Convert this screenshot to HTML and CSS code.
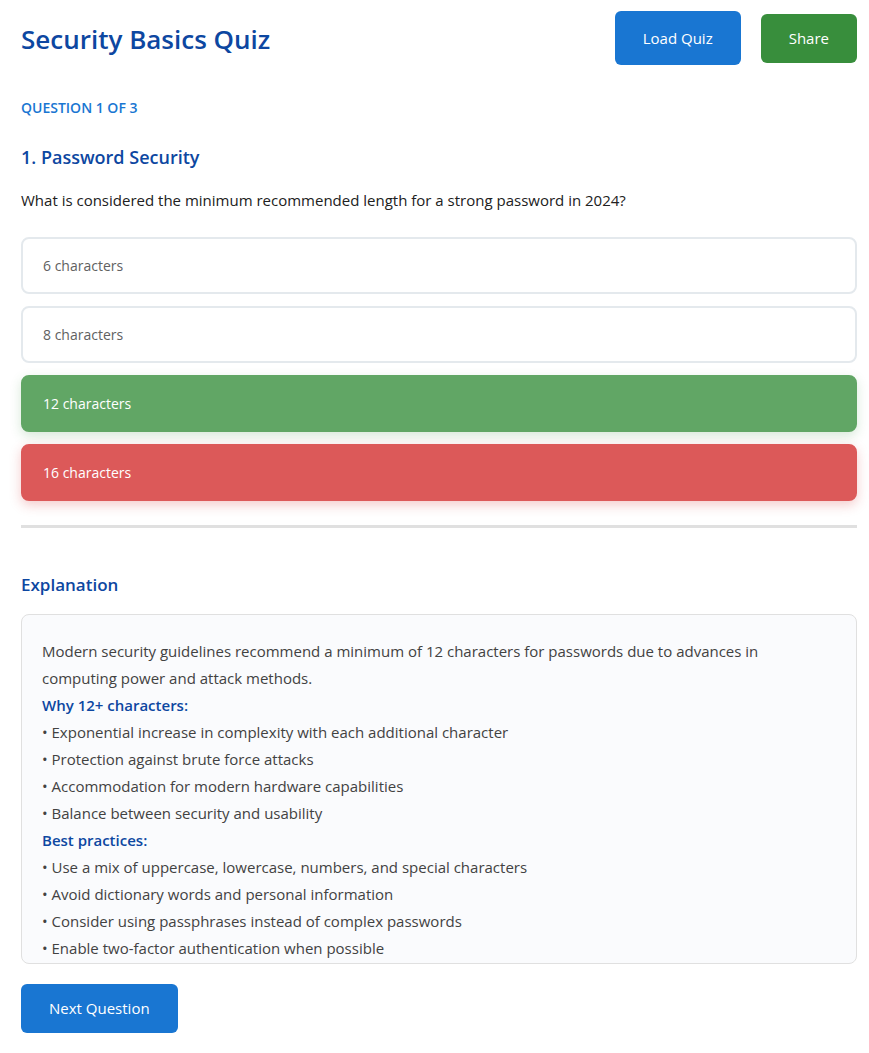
FILE: index.html
```html
<!DOCTYPE html>
<html lang="en">
<head>
<meta charset="utf-8">
<meta name="viewport" content="width=device-width, initial-scale=1">
<title>Security Basics Quiz</title>
<link rel="stylesheet" href="styles.css">
</head>
<body>
<main class="quiz">
  <header class="quiz-header">
    <h1 class="quiz-title">Security Basics Quiz</h1>
    <div class="actions">
      <button class="btn btn-load" type="button">Load Quiz</button>
      <button class="btn btn-share" type="button">Share</button>
    </div>
  </header>
  <p class="progress">Question 1 of 3</p>
  <h2 class="question-title">1. Password Security</h2>
  <p class="question-text">What is considered the minimum recommended length for a strong password in 2024?</p>
  <div class="options">
    <button class="option" type="button">6 characters</button>
    <button class="option" type="button">8 characters</button>
    <button class="option correct" type="button">12 characters</button>
    <button class="option incorrect" type="button">16 characters</button>
  </div>
  <section class="explanation">
    <h3 class="explanation-title">Explanation</h3>
    <div class="explanation-box">
      Modern security guidelines recommend a minimum of 12 characters for passwords due to advances in computing power and attack methods.<br>
      <strong>Why 12+ characters:</strong><br>
      • Exponential increase in complexity with each additional character<br>
      • Protection against brute force attacks<br>
      • Accommodation for modern hardware capabilities<br>
      • Balance between security and usability<br>
      <strong>Best practices:</strong><br>
      • Use a mix of uppercase, lowercase, numbers, and special characters<br>
      • Avoid dictionary words and personal information<br>
      • Consider using passphrases instead of complex passwords<br>
      • Enable two-factor authentication when possible
    </div>
  </section>
  <button class="btn btn-next" type="button">Next Question</button>
</main>
</body>
</html>
```
FILE: styles.css
```css
* { box-sizing: border-box; }
body {
  margin: 0;
  background: #fff;
  color: #212121;
  font: 16px/24px "Segoe UI", "Open Sans", "Noto Sans", sans-serif;
}
h1, h2, h3, p { margin: 0; }
button { font: inherit; cursor: pointer; }
.quiz { padding: 11px 12px 20px 21px; }
.quiz-header {
  display: flex;
  justify-content: space-between;
  align-items: center;
}
.quiz-title { padding-top: 2px; font-size: 26px; line-height: 40px; font-weight: 600; color: #0d47a1; }
.actions { display: flex; align-items: center; gap: 20px; }
.btn {
  border: 0;
  border-radius: 6px;
  padding: 12px 28px;
  color: #fff;
  line-height: 25px;
  font-size: 15px;
}
.btn-load { background: #1976d2; padding-block: 14px; line-height: 26px; }
.btn-share { background: #388e3c; }
.btn-next { background: #1976d2; margin-top: 20px; }
.progress {
  margin-top: 33px;
  color: #1976d2;
  font-size: 14px;
  line-height: 20px;
  font-weight: 600;
  text-transform: uppercase;
}
.question-title { margin-top: 25px; font-size: 18px; line-height: 28px; font-weight: 600; color: #0d47a1; }
.question-text { margin-top: 17px; font-size: 15px; line-height: 24px; }
.options {
  display: grid;
  gap: 12px;
  margin-top: 25px;
}
.option {
  border: 2px solid #e4e9ed;
  border-radius: 8px;
  padding: 16px 20px;
  background: #fff;
  color: #616161;
  font-size: 14px;
  line-height: 21px;
  text-align: left;
}
.option.correct { border-color: #61a665; background: #61a665; color: #fff; box-shadow: 0 4px 12px rgba(56, 142, 60, .2); }
.option.incorrect { border-color: #dc5959; background: #dc5959; color: #fff; box-shadow: 0 4px 12px rgba(211, 47, 47, .25); }
.explanation { margin-top: 24px; padding-top: 44px; border-top: 3px solid #e0e0e0; }
.explanation-title { font-size: 17px; line-height: 26px; font-weight: 600; color: #0d47a1; }
.explanation-box {
  margin-top: 16px;
  min-height: 350px;
  border: 1px solid #e0e0e0;
  border-radius: 8px;
  padding: 23px 20px 0;
  background: #fafbfd;
  color: #424242;
  font-size: 15px;
  line-height: 27px;
}
.explanation-box strong { color: #0d47a1; font-weight: 600; }
```
